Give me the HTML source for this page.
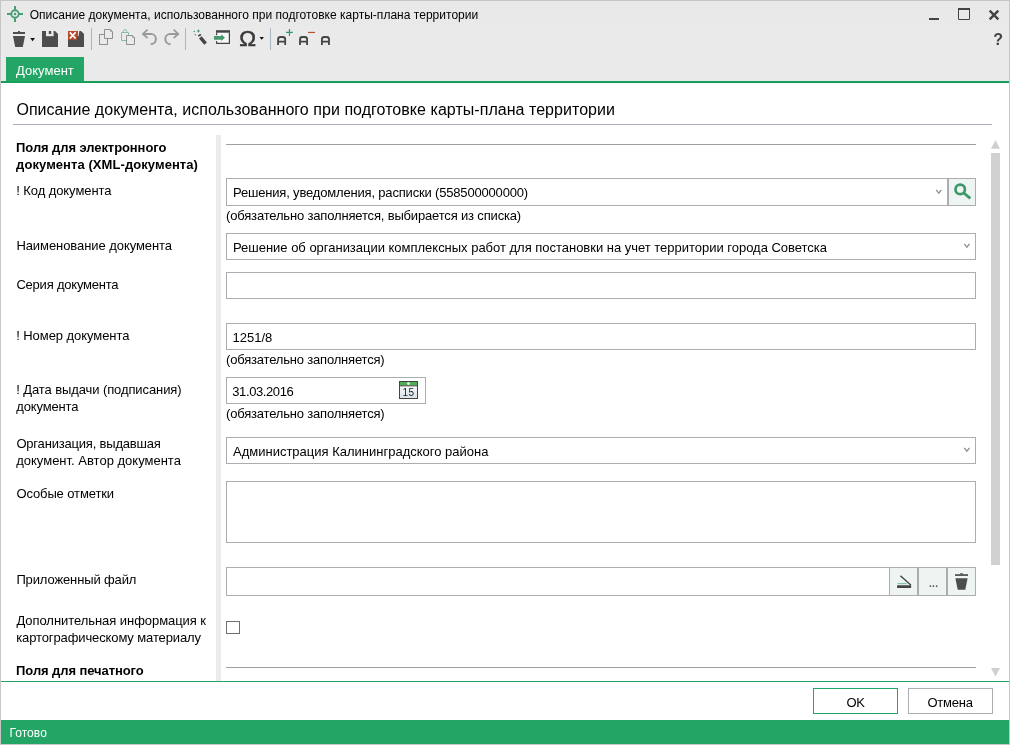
<!DOCTYPE html>
<html lang="ru"><head><meta charset="utf-8"><title>Описание документа</title>
<style>
html,body{margin:0;padding:0}
body{width:1010px;height:745px;position:relative;overflow:hidden;background:#eaeaea;font-family:"Liberation Sans",sans-serif;}
#frame{position:absolute;left:0;top:0;width:1008px;height:743px;border:1px solid #c6c6c6;pointer-events:none;z-index:5}
.r{position:absolute}
.bx{position:absolute;box-sizing:border-box;border:1px solid #abadb3;background:#fff}
.t{position:absolute;white-space:nowrap;line-height:20px;height:20px}
svg#ic{position:absolute;left:0;top:0;will-change:transform}
#txt{position:absolute;left:0;top:0;width:1010px;height:745px;will-change:transform}
</style></head><body>
<div class="r" style="left:1px;top:1px;width:1008px;height:26px;background:#e9e9e9"></div>
<div class="r" style="left:1px;top:83px;width:1008px;height:637px;background:#fff"></div>
<div class="r" style="left:6px;top:57px;width:78px;height:25px;background:#23a566"></div>
<div class="r" style="left:1px;top:81px;width:1008px;height:1px;background:#1ba15d"></div>
<div class="r" style="left:1px;top:82px;width:1008px;height:1px;background:#119d56"></div>
<div class="r" style="left:13px;top:124px;width:979px;height:1px;background:#adafb9"></div>
<div class="r" style="left:216px;top:135px;width:5px;height:546px;background:#ebebeb"></div>
<div class="r" style="left:226px;top:144px;width:750px;height:1px;background:#a0a0a0"></div>
<div class="r" style="left:226px;top:667px;width:750px;height:1px;background:#a0a0a0"></div>
<div class="bx" style="left:226px;top:178px;width:722px;height:28px;"></div>
<div class="bx" style="left:948px;top:178px;width:28px;height:28px;background:#eef4f1;"></div>
<div class="r" style="left:947px;top:178px;width:2px;height:28px;background:#abadb3"></div>
<div class="bx" style="left:226px;top:233px;width:750px;height:27px;"></div>
<div class="bx" style="left:226px;top:272px;width:750px;height:27px;"></div>
<div class="bx" style="left:226px;top:323px;width:750px;height:27px;"></div>
<div class="bx" style="left:226px;top:377px;width:200px;height:27px;"></div>
<div class="bx" style="left:226px;top:437px;width:750px;height:27px;"></div>
<div class="bx" style="left:226px;top:481px;width:750px;height:62px;"></div>
<div class="bx" style="left:226px;top:567px;width:664px;height:29px;"></div>
<div class="bx" style="left:889px;top:567px;width:29px;height:29px;background:#eef4f1;"></div>
<div class="bx" style="left:918px;top:567px;width:29px;height:29px;background:#eef4f1;"></div>
<div class="bx" style="left:947px;top:567px;width:29px;height:29px;background:#eef4f1;"></div>
<div class="bx" style="left:226px;top:621px;width:14px;height:13px;border-color:#707070;"></div>
<div class="r" style="left:991px;top:153px;width:9px;height:412px;background:#d1d1d1"></div>
<div class="r" style="left:1px;top:681px;width:1008px;height:1px;background:#23a566"></div>
<div class="r" style="left:1px;top:682px;width:1008px;height:38px;background:#fff"></div>
<div class="bx" style="left:813px;top:688px;width:85px;height:26px;border-color:#23a566;"></div>
<div class="bx" style="left:908px;top:688px;width:85px;height:26px;"></div>
<div class="r" style="left:1px;top:720px;width:1008px;height:24px;background:#23a566"></div>
<svg id="ic" width="1010" height="745" viewBox="0 0 1010 745">
<!-- app icon -->
<g fill="none" stroke="#4aa074">
<circle cx="15" cy="14" r="3.700" stroke-width="1.900"/>
<path d="M15 6V10.3M15 17.7V22M7 14H11.3M18.7 14H23" stroke-width="2"/>
</g>
<circle cx="15" cy="14" r="1.2" fill="#3f9a6c"/>
<!-- window controls -->
<rect x="929" y="18" width="10" height="2" fill="#444"/>
<path d="M958.5 9V19.5H969.5V9" fill="none" stroke="#444" stroke-width="1"/>
<rect x="958" y="8" width="12" height="2" fill="#444"/>
<path d="M989.7 10.7L998.3 19.3M998.3 10.7L989.7 19.3" stroke="#444" stroke-width="2.4" fill="none"/>
<!-- toolbar: trash -->
<g fill="#4d4d4d">
<rect x="13" y="32" width="12" height="2"/>
<rect x="18" y="31" width="2" height="1.500"/>
<path d="M13 36.100H25L22.800 47H15.200Z"/>
</g>
<path d="M30.2 38.1H35L32.6 41.3Z" fill="#111"/>
<!-- save -->
<path d="M42 31H55L58 34V47H42Z" fill="#4d4d4d"/>
<path d="M46 31H53.6V36.2H46Z" fill="#eaeaea"/>
<rect x="48.8" y="31" width="2.4" height="3" fill="#4d4d4d"/>
<!-- save-x -->
<path d="M68 31H81L84 34V47H68Z" fill="#4d4d4d"/>
<path d="M77.8 31H79.3L78.6 36.2H77.8Z" fill="#eaeaea"/>
<rect x="68" y="31" width="9" height="8.8" fill="#b8492b"/>
<path d="M69.800 32.300L75.600 38.500M75.600 32.300L69.800 38.500" stroke="#fff" stroke-width="1.700" fill="none"/>
<!-- separators -->
<rect x="91" y="28" width="1" height="22" fill="#abb5c2"/>
<rect x="185" y="28" width="1" height="22" fill="#abb5c2"/>
<rect x="270" y="28" width="1" height="22" fill="#abb5c2"/>
<!-- copy -->
<g fill="#eaeaea" stroke="#909090" stroke-width="1">
<rect x="99.500" y="34.500" width="8" height="10"/>
<path d="M104.500 29.500H110.500L112.500 31.500V38.500H104.500Z"/>
<path d="M110.500 30V31.500H112" fill="none" stroke="#a8a8a8"/>
</g>
<!-- paste -->
<g fill="none" stroke-width="1">
<path d="M121.500 32.500H128.500V40.500H121.500Z" stroke="#84c0a0"/>
<path d="M122.800 32.300L124.100 29.700H125.900L127.200 32.300" stroke="#84c0a0"/>
<path d="M126.500 35.500H132.500L134.500 37.500V44.500H126.500Z" fill="#eaeaea" stroke="#909090"/>
<path d="M132.500 36V37.500H134" stroke="#a8a8a8"/>
</g>
<!-- undo / redo -->
<g fill="none" stroke="#9a9a9a" stroke-width="1.800">
<path d="M147.600 29.700L142.900 33.900L147.600 38.100"/>
<path d="M143.400 33.900H151.300A5.200 5.200 0 0 1 150.700 44.260" stroke-width="1.950"/>
<path d="M173.600 29.700L178.300 33.900L173.600 38.100"/>
<path d="M177.800 33.900H169.900A5.200 5.200 0 0 0 170.500 44.260" stroke-width="1.950"/>
</g>
<!-- wand -->
<path d="M200.300 37.300L205.600 43.700" stroke="#454545" stroke-width="3.400" fill="none"/>
<path d="M198.300 36L200.900 34.500" stroke="#454545" stroke-width="1.500" fill="none"/>
<g fill="#4a9e73">
<path d="M198.400 29.200L199.800 31L198.400 32.700L197 31Z"/>
<path d="M193 31.400L195 30.400L195 32.300Z"/>
<path d="M194.300 34L196.300 34.300L195.400 36Z"/>
</g>
<!-- insert -->
<rect x="216.600" y="31" width="12.900" height="12.300" fill="#f7f7f7"/>
<path d="M216.650 32.500V35.200M216.650 40.900V43.300H229.400V32.500" fill="none" stroke="#444" stroke-width="1.200"/>
<rect x="216.050" y="30.200" width="13.950" height="2.500" fill="#444"/>
<path d="M214 35.900H221.300V34.200L225 37.700L221.300 41.100V39.800H214Z" fill="#469a6e"/>
<!-- omega -->
<text x="239.300" y="46" font-family="Liberation Sans, sans-serif" font-size="22.500" fill="#3a3a3a" stroke="#3a3a3a" stroke-width="0.500">Ω</text>
<path d="M259.500 36.900H263.900L261.700 39.800Z" fill="#111"/>
<!-- A+ A- A -->
<g fill="none" stroke="#444" stroke-width="1.800">
<path d="M278.100 44.900V39.400Q278.100 37 280.500 37H282.800Q285.200 37 285.200 39.400V44.900M278.100 41.600H285.200"/>
<path d="M300 44.900V39.400Q300 37 302.400 37H304.700Q307.100 37 307.100 39.400V44.900M300 41.600H307.100"/>
<path d="M321.900 44.900V39.400Q321.900 37 324.300 37H326.600Q329 37 329 39.400V44.900M321.900 41.600H329"/>
</g>
<path d="M289.450 28.900V36M286.100 32.450H292.800" stroke="#2f9663" stroke-width="1.200" fill="none"/>
<path d="M308 32.450H315" stroke="#b8502f" stroke-width="1.200" fill="none"/>
<!-- scrollbar arrows -->
<path d="M991 148.700H1000L995.500 140Z" fill="#d0d0d0"/>
<path d="M991 668H1000L995.500 676.600Z" fill="#d0d0d0"/>
<!-- chevrons -->
<g fill="none" stroke="#8e8e8e" stroke-width="1.300">
<path d="M936.200 189.900L938.800 193.100L941.400 189.900"/>
<path d="M964.300 243.900L966.900 247.100L969.500 243.900"/>
<path d="M964.300 447.900L966.900 451.100L969.500 447.900"/>
</g>
<!-- magnifier -->
<circle cx="960.200" cy="189.400" r="4.700" fill="none" stroke="#3d9769" stroke-width="2.700"/>
<path d="M963.800 193L970.300 198.300" stroke="#3d9769" stroke-width="2.800" fill="none"/>
<!-- calendar -->
<defs><linearGradient id="cg" x1="0" y1="0" x2="0" y2="1"><stop offset="0" stop-color="#ffffff"/><stop offset="1" stop-color="#d9e2ea"/></linearGradient></defs>
<rect x="399.500" y="381.500" width="18" height="17" fill="url(#cg)" stroke="#444" stroke-width="1"/>
<rect x="400" y="382" width="17" height="3.500" fill="#4caf50"/>
<rect x="399.500" y="385.300" width="18" height="1" fill="#444"/>
<circle cx="408.500" cy="383.600" r="1.300" fill="#fff"/>
<text x="402.500" y="396" font-family="Liberation Sans, sans-serif" font-size="10" letter-spacing="0.500" fill="#222">15</text>
<!-- scanner -->
<rect x="897" y="585.200" width="14.200" height="2.900" rx="0.800" fill="#444"/>
<rect x="897.600" y="583" width="9" height="1.200" fill="#7fc4a2"/>
<path d="M900.400 575.800L911 585.300" stroke="#444" stroke-width="1.400" fill="none"/>
<!-- dots -->
<text x="929" y="587" font-family="Liberation Sans, sans-serif" font-size="10" font-weight="700" letter-spacing="0.300" fill="#555">...</text>
<!-- small trash -->
<g fill="#4d4d4d">
<rect x="955" y="574.200" width="13" height="1.700"/>
<rect x="960.200" y="573.200" width="2.600" height="1.200"/>
<path d="M955.400 578.300H967.600L965.300 589.700H957.700Z"/>
</g>
</svg>

<div id="txt">
<span class="t" id="title" style="left:29.7px;top:5.00px;font-size:12px;font-weight:400;color:#000000;letter-spacing:0.025px">Описание документа, использованного при подготовке карты-плана территории</span>
<span class="t" id="tab" style="left:16.1px;top:61.00px;font-size:13px;font-weight:400;color:#ffffff;letter-spacing:0.004px">Документ</span>
<span class="t" id="hdr" style="left:16.4px;top:100.00px;font-size:16px;font-weight:400;color:#000000;letter-spacing:0.040px">Описание документа, использованного при подготовке карты-плана территории</span>
<span class="t" id="b1" style="left:16.1px;top:138.00px;font-size:13px;font-weight:700;color:#000000;letter-spacing:-0.081px">Поля для электронного</span>
<span class="t" id="b2" style="left:16.1px;top:155.00px;font-size:13px;font-weight:700;color:#000000;letter-spacing:0.070px">документа (XML-документа)</span>
<span class="t" id="l1" style="left:16.2px;top:181.00px;font-size:13px;font-weight:400;color:#000000;letter-spacing:-0.075px">! Код документа</span>
<span class="t" id="l2" style="left:16.4px;top:236.00px;font-size:13px;font-weight:400;color:#000000;letter-spacing:-0.069px">Наименование документа</span>
<span class="t" id="l3" style="left:16.4px;top:275.00px;font-size:13px;font-weight:400;color:#000000;letter-spacing:-0.210px">Серия документа</span>
<span class="t" id="l4" style="left:16.2px;top:326.00px;font-size:13px;font-weight:400;color:#000000;letter-spacing:-0.062px">! Номер документа</span>
<span class="t" id="l5a" style="left:16.2px;top:380.00px;font-size:13px;font-weight:400;color:#000000;letter-spacing:-0.096px">! Дата выдачи (подписания)</span>
<span class="t" id="l5b" style="left:16.2px;top:397.00px;font-size:13px;font-weight:400;color:#000000;letter-spacing:-0.132px">документа</span>
<span class="t" id="l6a" style="left:16.4px;top:434.00px;font-size:13px;font-weight:400;color:#000000;letter-spacing:-0.191px">Организация, выдавшая</span>
<span class="t" id="l6b" style="left:16.2px;top:451.00px;font-size:13px;font-weight:400;color:#000000;letter-spacing:0.002px">документ. Автор документа</span>
<span class="t" id="l7" style="left:16.4px;top:484.00px;font-size:13px;font-weight:400;color:#000000;letter-spacing:-0.112px">Особые отметки</span>
<span class="t" id="l8" style="left:16.4px;top:570.00px;font-size:13px;font-weight:400;color:#000000;letter-spacing:-0.127px">Приложенный файл</span>
<span class="t" id="l9a" style="left:16.4px;top:611.00px;font-size:13px;font-weight:400;color:#000000;letter-spacing:-0.053px">Дополнительная информация к</span>
<span class="t" id="l9b" style="left:16.2px;top:628.00px;font-size:13px;font-weight:400;color:#000000;letter-spacing:-0.113px">картографическому материалу</span>
<span class="t" id="b3" style="left:16.1px;top:661.00px;font-size:13px;font-weight:700;color:#000000;letter-spacing:-0.084px">Поля для печатного</span>
<span class="t" id="f1" style="left:233px;top:183.00px;font-size:13px;font-weight:400;color:#000000;letter-spacing:-0.176px">Решения, уведомления, расписки (558500000000)</span>
<span class="t" id="n1" style="left:226px;top:206.00px;font-size:13px;font-weight:400;color:#000000;letter-spacing:-0.167px">(обязательно заполняется, выбирается из списка)</span>
<span class="t" id="f2" style="left:233px;top:238.00px;font-size:13px;font-weight:400;color:#000000;letter-spacing:-0.016px">Решение об организации комплексных работ для постановки на учет территории города Советска</span>
<span class="t" id="f4" style="left:232.4px;top:328.00px;font-size:13px;font-weight:400;color:#000000;letter-spacing:0.039px">1251/8</span>
<span class="t" id="n2" style="left:226px;top:350.00px;font-size:13px;font-weight:400;color:#000000;letter-spacing:-0.184px">(обязательно заполняется)</span>
<span class="t" id="f5" style="left:232.3px;top:382.00px;font-size:13px;font-weight:400;color:#000000;letter-spacing:-0.408px">31.03.2016</span>
<span class="t" id="n3" style="left:226px;top:404.00px;font-size:13px;font-weight:400;color:#000000;letter-spacing:-0.184px">(обязательно заполняется)</span>
<span class="t" id="f6" style="left:233px;top:442.00px;font-size:13px;font-weight:400;color:#000000;letter-spacing:0.001px">Администрация Калининградского района</span>
<span class="t" id="ok" style="left:846.6px;top:693.00px;font-size:13px;font-weight:400;color:#000000;letter-spacing:-0.398px">OK</span>
<span class="t" id="cancel" style="left:927.5px;top:693.00px;font-size:13px;font-weight:400;color:#000000;letter-spacing:-0.243px">Отмена</span>
<span class="t" id="status" style="left:9.4px;top:723.00px;font-size:12px;font-weight:400;color:#ffffff;letter-spacing:0.073px">Готово</span>
<span class="t" id="help" style="left:993.2px;top:30.00px;font-size:16px;font-weight:700;color:#444;letter-spacing:-1.981px">?</span>
</div>
<div id="frame"></div>
</body></html>
